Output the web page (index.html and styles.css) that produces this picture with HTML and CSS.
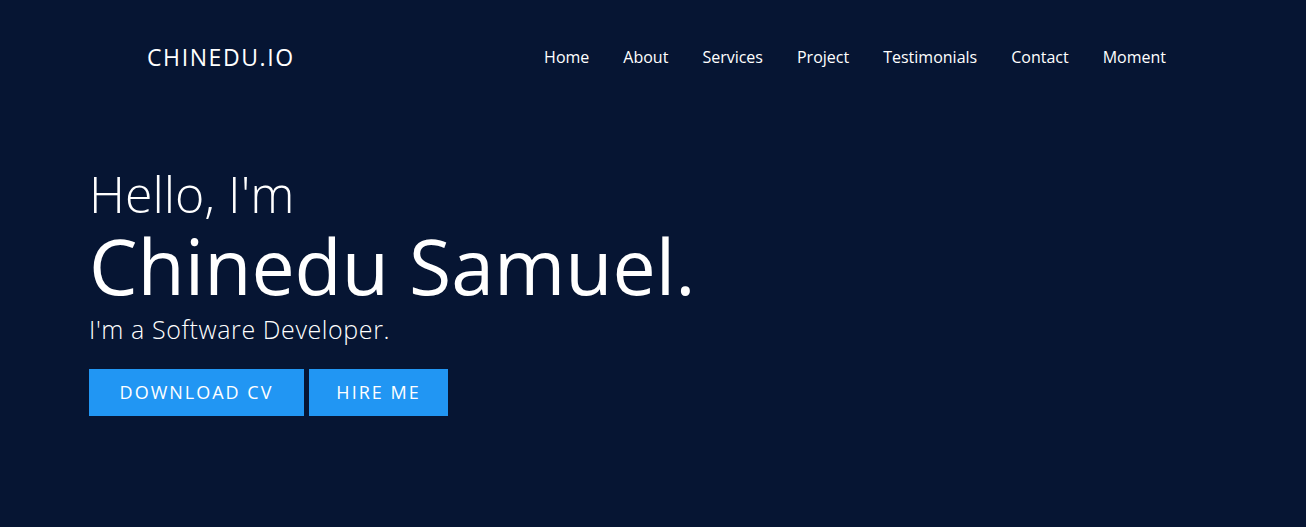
FILE: index.html
```html
<!DOCTYPE html>
<html lang="en">
<head>
<meta charset="utf-8">
<title>Chinedu.io</title>
<link rel="stylesheet" href="styles.css">
</head>
<body>
<header class="header">
  <a class="logo" href="#">CHINEDU.IO</a>
  <nav class="nav">
    <a href="#">Home</a>
    <a href="#">About</a>
    <a href="#">Services</a>
    <a href="#">Project</a>
    <a href="#">Testimonials</a>
    <a href="#">Contact</a>
    <a href="#">Moment</a>
  </nav>
</header>
<section class="hero">
  <h3 class="hello">Hello, I'm</h3>
  <h1 class="name">Chinedu Samuel.</h1>
  <p class="role">I'm a Software Developer.</p>
  <div class="actions">
    <a class="btn btn-cv" href="#">DOWNLOAD CV</a>
    <a class="btn btn-hire" href="#">HIRE ME</a>
  </div>
</section>
</body>
</html>
```
FILE: styles.css
```css
* { box-sizing: border-box; }
html, body { margin: 0; padding: 0; }
body {
  background: #061533;
  color: #ffffff;
  font-family: "Open Sans", "Liberation Sans", sans-serif;
  height: 527px;
  overflow: hidden;
}
a { color: inherit; text-decoration: none; }
.header {
  display: flex;
  justify-content: space-between;
  align-items: center;
  height: 114px;
  padding: 0 140px 0 147px;
}
.logo {
  font-size: 23px;
  font-weight: 500;
  letter-spacing: 1.6px;
}
.nav {
  display: flex;
  gap: 34px;
  font-size: 16px;
}
.hero {
  padding: 50px 0 0 89px;
}
.hello {
  margin: 0;
  font-size: 50px;
  font-weight: 300;
  line-height: 1.2;
}
.name {
  margin: 0;
  font-size: 77px;
  font-weight: 500;
  line-height: 1.1;
}
.role {
  margin: 3px 0 0;
  font-size: 25px;
  font-weight: 300;
  line-height: 1.4;
  letter-spacing: 0.6px;
}
.actions {
  display: flex;
  gap: 5px;
  margin-top: 22px;
}
.btn {
  display: inline-flex;
  align-items: center;
  justify-content: center;
  height: 47px;
  background: #2196f3;
  font-size: 18px;
  letter-spacing: 2px;
  white-space: nowrap;
}
.btn-cv { width: 215px; }
.btn-hire { width: 139px; }
```
